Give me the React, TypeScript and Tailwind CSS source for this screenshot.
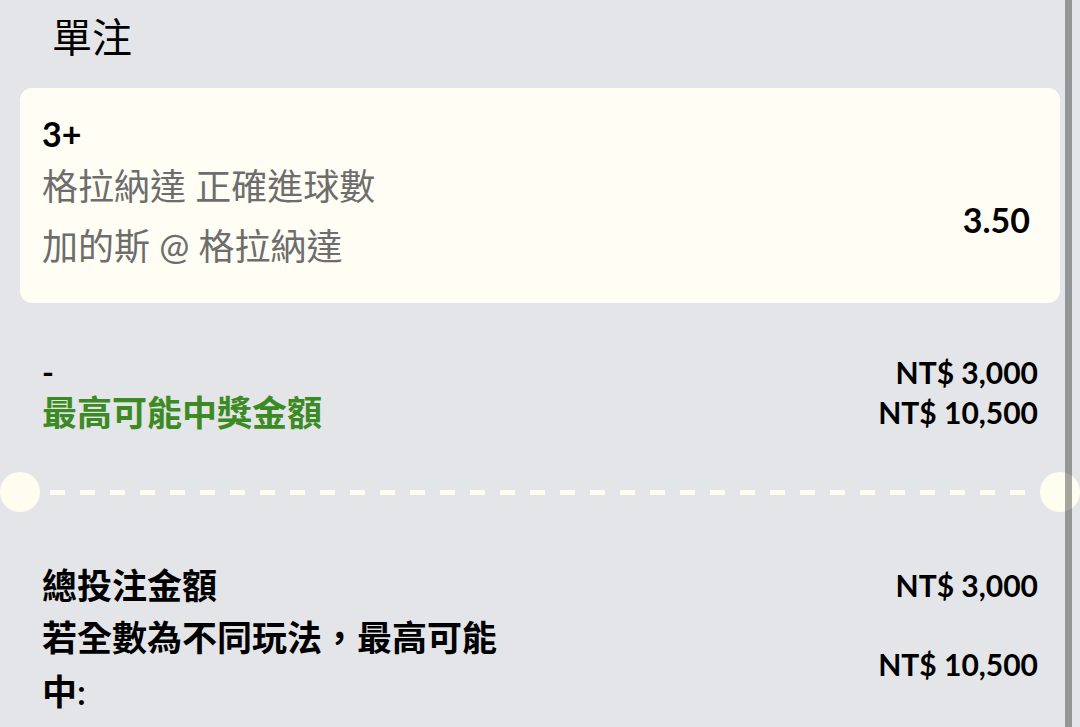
const font = { fontFamily: '"Lato", "Noto Sans CJK TC", sans-serif' }

function Amount({ children }: { children: React.ReactNode }) {
  return <span className="text-[30px] font-bold leading-[40px] text-black">{children}</span>
}

export default function App() {
  return (
    <div style={font} className="relative h-[727px] w-[1080px] overflow-hidden bg-[#e4e5e8] text-black">
      <div className="px-[52px] pt-[13px] text-[40px] leading-[48px]">單注</div>

      <div className="mx-[20px] mt-[27px] rounded-[12px] bg-[#fffdf4] pb-[27px] pl-[22px] pr-[30px] pt-[26px]">
        <div className="text-[34px] font-bold leading-[40px]">3+</div>
        <div className="mt-[2px] flex items-center justify-between">
          <div className="text-[36px] leading-[60px] text-[#6d6d6d]">
            <div>格拉納達 正確進球數</div>
            <div>加的斯 @ 格拉納達</div>
          </div>
          <span className="mt-[6px] text-[34px] font-bold">3.50</span>
        </div>
      </div>

      <div className="mt-[49px] px-[42px]">
        <div className="flex items-center justify-between">
          <span className="text-[32px] font-bold leading-[40px]">-</span>
          <Amount>NT$ 3,000</Amount>
        </div>
        <div className="flex items-center justify-between">
          <span className="text-[35px] font-semibold leading-[40px] text-[#3b8a24]">最高可能中獎金額</span>
          <Amount>NT$ 10,500</Amount>
        </div>
      </div>

      <div className="mt-[40px] flex items-center">
        <div className="h-[40px] w-[40px] shrink-0 rounded-full bg-[#fffdf0]" />
        <div className="mx-[10px] h-[5px] flex-1 bg-[repeating-linear-gradient(90deg,#fffdf0_0_15px,transparent_15px_30px)]" />
        <div className="h-[40px] w-[40px] shrink-0 rounded-full bg-[#fffdf0]" />
      </div>

      <div className="mt-[48px] px-[42px]">
        <div className="flex items-center justify-between">
          <span className="text-[35px] font-semibold leading-[50px]">總投注金額</span>
          <Amount>NT$ 3,000</Amount>
        </div>
        <div className="flex items-center justify-between">
          <span className="w-[470px] text-[35px] font-semibold leading-[54px]">若全數為不同玩法，最高可能中:</span>
          <Amount>NT$ 10,500</Amount>
        </div>
      </div>

      <div className="absolute bottom-0 right-[8px] top-0 w-[7px] bg-black/35" />
    </div>
  )
}
